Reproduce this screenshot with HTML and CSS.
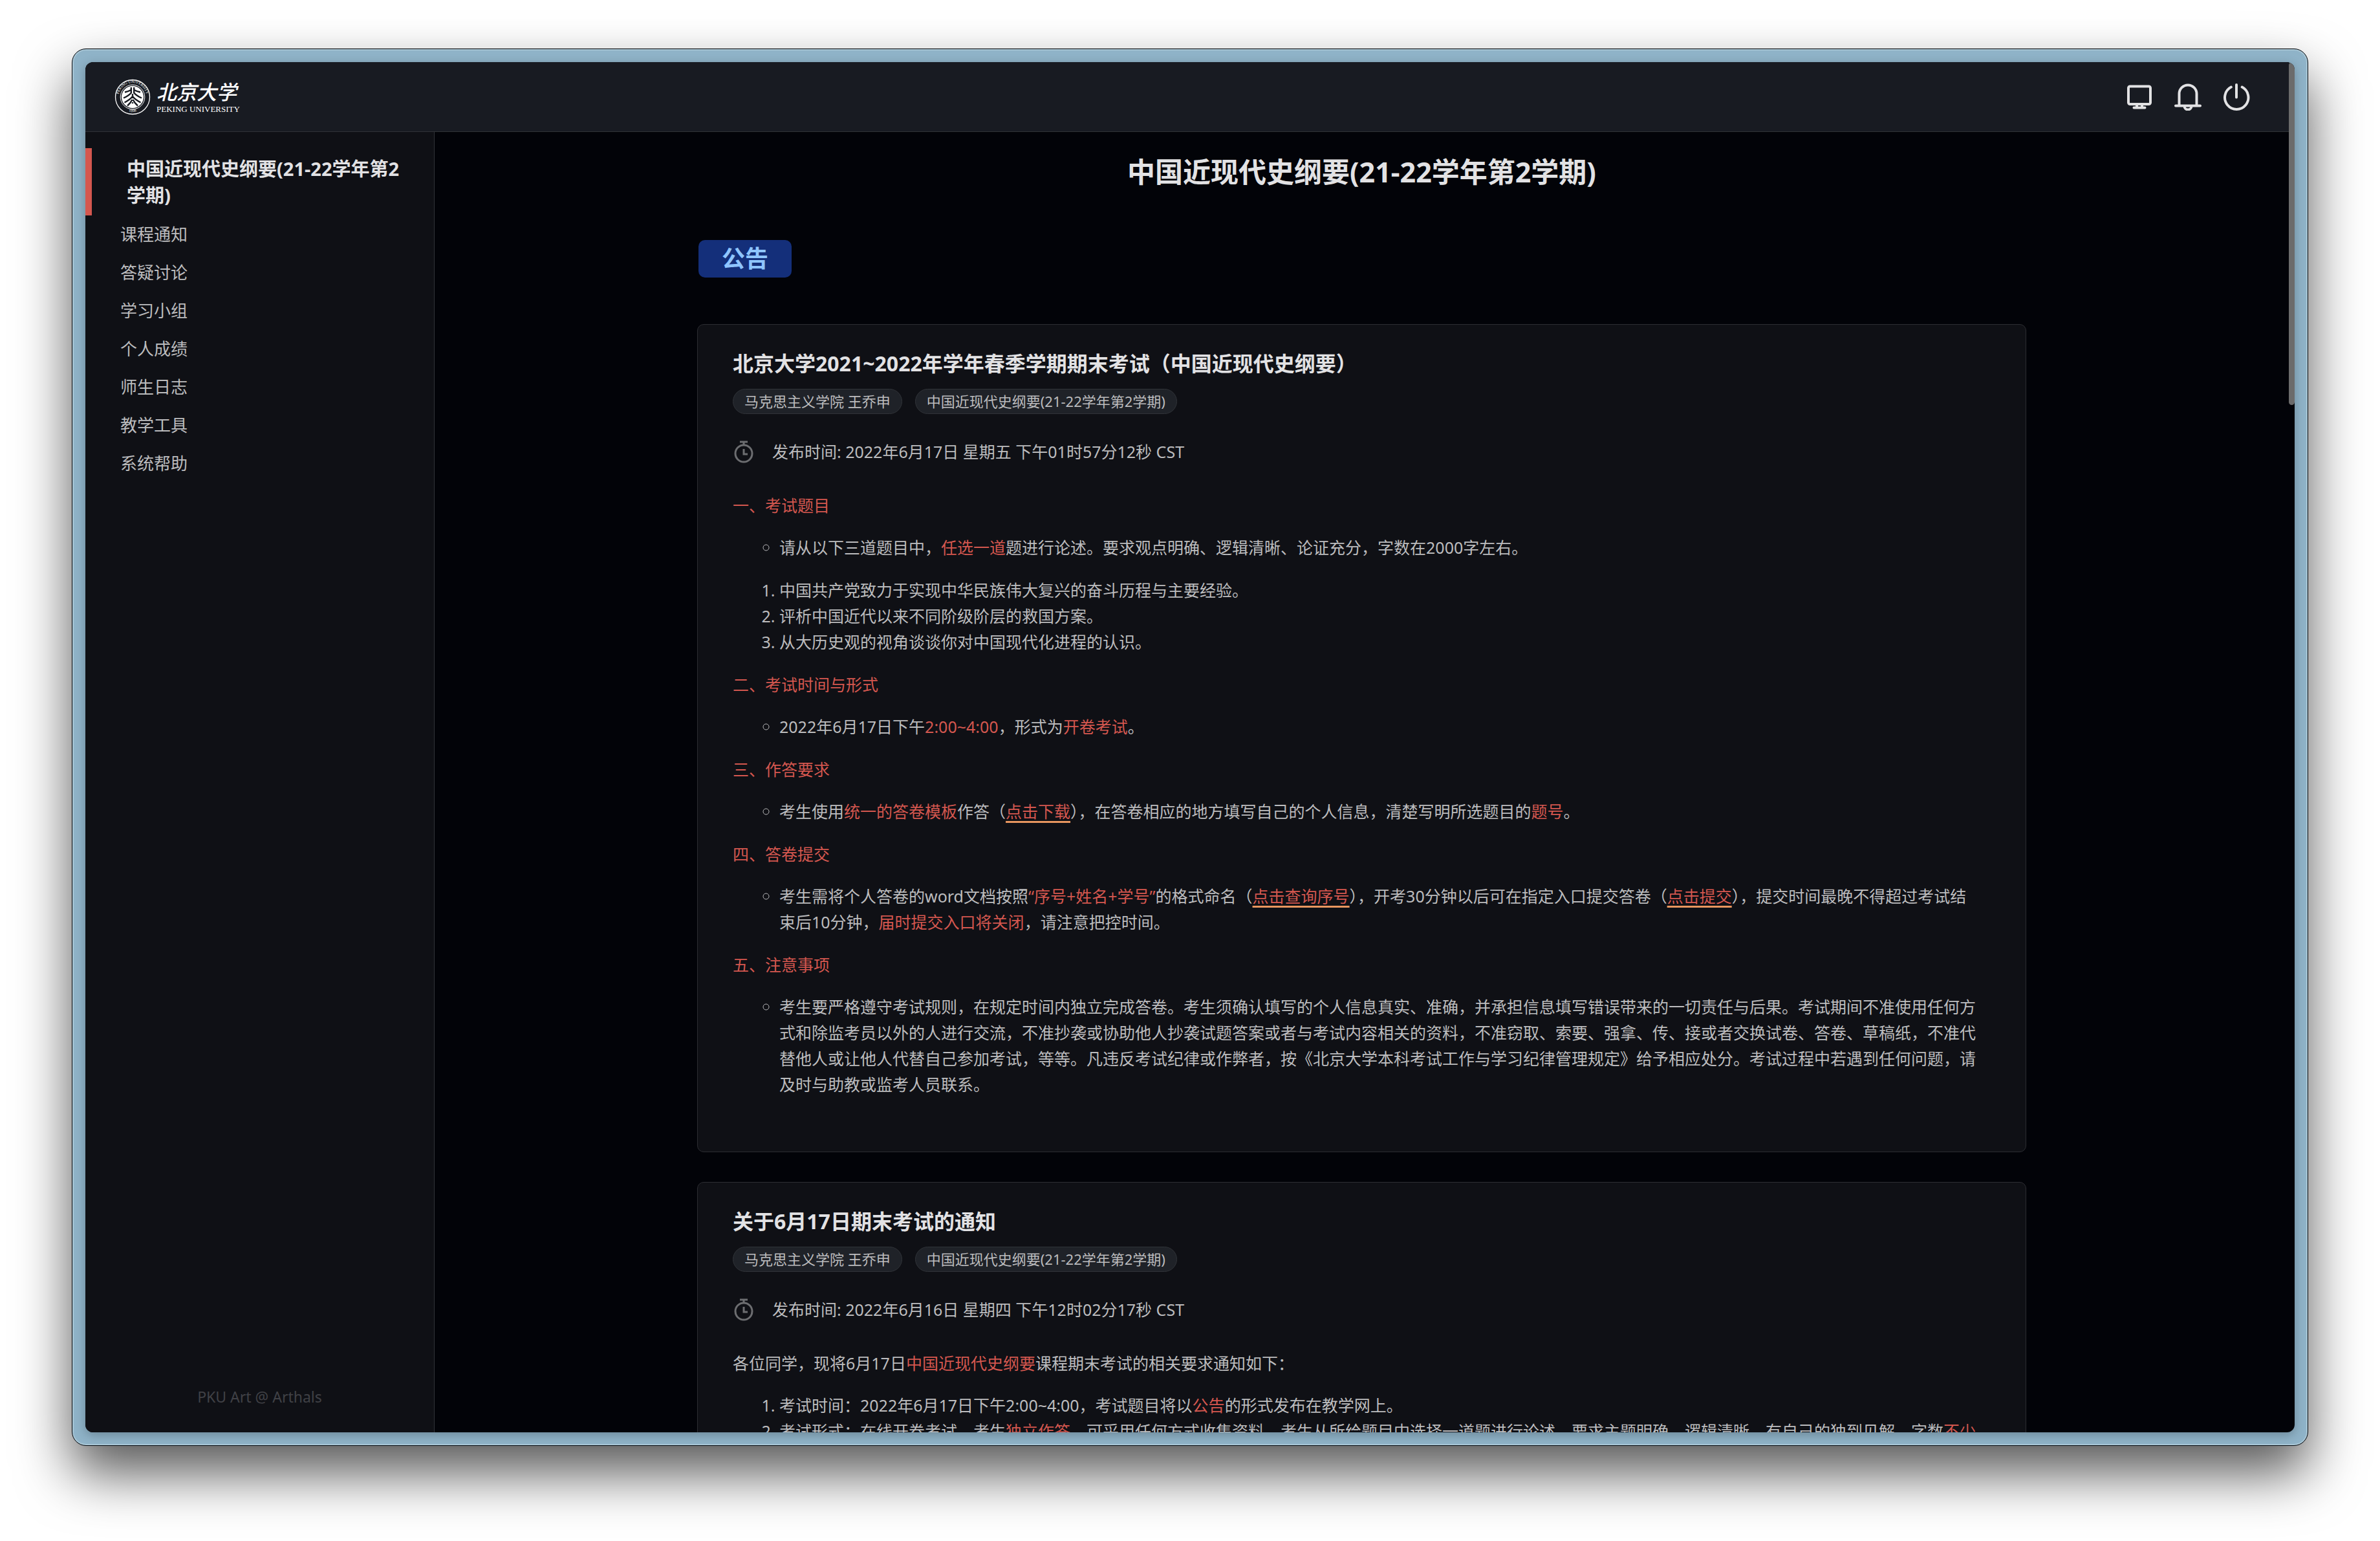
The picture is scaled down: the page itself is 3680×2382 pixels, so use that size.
FILE: index.html
```html
<!DOCTYPE html>
<html lang="zh-CN">
<head>
<meta charset="utf-8">
<title>中国近现代史纲要(21-22学年第2学期)</title>
<link rel="stylesheet" href="styles.css">
</head>
<body>
<div class="window">
  <div class="screen">
    <div class="page">
      <header class="topbar">
        <a class="brand" href="#" aria-label="北京大学">
          <svg class="seal" viewBox="0 0 56 56" aria-hidden="true">
            <defs>
              <path id="ring-top" d="M9.5 38.5A21.5 21.5 0 1 1 46.5 38.5"/>
              <path id="ring-bottom" d="M13 45.5A23 23 0 0 0 43 45.5"/>
            </defs>
            <circle cx="28" cy="28" r="26.5" fill="none" stroke="#fff" stroke-width="1.3"/>
            <circle cx="28" cy="28" r="18.8" fill="none" stroke="#fff" stroke-width="1"/>
            <circle cx="28" cy="28" r="17" fill="#fff"/>
            <text class="seal-text"><textPath href="#ring-top" startOffset="50%" text-anchor="middle">PEKING UNIVERSITY</textPath></text>
            <text class="seal-text"><textPath href="#ring-bottom" startOffset="50%" text-anchor="middle">1898</textPath></text>
            <g fill="none" stroke="#181b22" stroke-width="2.4">
              <path d="M25.8 13V21.5Q22 26 14 29.5M30.2 13V21.5Q34 26 42 29.5"/>
              <path d="M16 20.5Q21 19.5 25.8 17M40 20.5Q35 19.5 30.2 17"/>
              <path d="M28 23V30M28 27Q24 32 15.500 36.500M28 27Q32 32 40.500 36.500"/>
              <path d="M27.500 32Q25 37 20 41.500M28.500 32Q31 37 36 41.500"/>
              <path d="M28 36V38"/>
            </g>
          </svg>
          <span class="wordmark">
            <span class="wordmark-zh">北京大学</span>
            <span class="wordmark-en">PEKING UNIVERSITY</span>
          </span>
        </a>
        <div class="actions">
          <button class="icon-button" type="button" aria-label="显示">
            <svg viewBox="0 0 42 42"><rect x="4" y="4.500" width="34" height="27.500" rx="2.500"/><path d="M17 32v5M25 32v5M12.500 37.500h17"/></svg>
          </button>
          <button class="icon-button" type="button" aria-label="通知">
            <svg viewBox="0 0 42 42"><path d="M7.500 34V16a13.500 13.500 0 0 1 27 0v18M2 34.500h38M15.500 35a5.500 5.500 0 0 0 11 0"/></svg>
          </button>
          <button class="icon-button" type="button" aria-label="退出">
            <svg viewBox="0 0 42 42"><path d="M12.800 5.600a18.200 18.200 0 1 0 16.900 0M21 2v19.500"/></svg>
          </button>
        </div>
      </header>
      <div class="body">
        <aside class="sidebar">
          <nav>
            <a class="course" href="#">中国近现代史纲要(21-22学年第2学期)</a>
            <ul class="menu">
              <li><a href="#">课程通知</a></li>
              <li><a href="#">答疑讨论</a></li>
              <li><a href="#">学习小组</a></li>
              <li><a href="#">个人成绩</a></li>
              <li><a href="#">师生日志</a></li>
              <li><a href="#">教学工具</a></li>
              <li><a href="#">系统帮助</a></li>
            </ul>
          </nav>
          <p class="credit">PKU Art @ Arthals</p>
        </aside>
        <main class="content">
          <h1>中国近现代史纲要(21-22学年第2学期)</h1>
          <div class="column">
            <h2 class="badge">公告</h2>
            <article class="card">
              <h3>北京大学2021~2022年学年春季学期期末考试（中国近现代史纲要）</h3>
              <div class="tags"><span class="tag">马克思主义学院 王乔申</span><span class="tag">中国近现代史纲要(21-22学年第2学期)</span></div>
              <div class="time">
                <svg viewBox="0 0 32 36" aria-hidden="true"><circle cx="16" cy="21" r="13"/><path d="M10 3h12M16 3v5M16 14v8h6"/></svg>
                <span>发布时间: 2022年6月17日 星期五 下午01时57分12秒 CST</span>
              </div>
              <div class="text">
                <p><em>一、考试题目</em></p>
                <ul><li>请从以下三道题目中，<em>任选一道</em>题进行论述。要求观点明确、逻辑清晰、论证充分，字数在2000字左右。</li></ul>
                <ol>
                  <li>中国共产党致力于实现中华民族伟大复兴的奋斗历程与主要经验。</li>
                  <li>评析中国近代以来不同阶级阶层的救国方案。</li>
                  <li>从大历史观的视角谈谈你对中国现代化进程的认识。</li>
                </ol>
                <p><em>二、考试时间与形式</em></p>
                <ul><li>2022年6月17日下午<em>2:00~4:00</em>，形式为<em>开卷考试</em>。</li></ul>
                <p><em>三、作答要求</em></p>
                <ul><li>考生使用<em>统一的答卷模板</em>作答（<a href="#">点击下载</a>），在答卷相应的地方填写自己的个人信息，清楚写明所选题目的<em>题号</em>。</li></ul>
                <p><em>四、答卷提交</em></p>
                <ul><li>考生需将个人答卷的word文档按照<em>“序号+姓名+学号”</em>的格式命名（<a href="#">点击查询序号</a>），开考30分钟以后可在指定入口提交答卷（<a href="#">点击提交</a>），提交时间最晚不得超过考试结束后10分钟，<em>届时提交入口将关闭</em>，请注意把控时间。</li></ul>
                <p><em>五、注意事项</em></p>
                <ul><li>考生要严格遵守考试规则，在规定时间内独立完成答卷。考生须确认填写的个人信息真实、准确，并承担信息填写错误带来的一切责任与后果。考试期间不准使用任何方式和除监考员以外的人进行交流，不准抄袭或协助他人抄袭试题答案或者与考试内容相关的资料，不准窃取、索要、强拿、传、接或者交换试卷、答卷、草稿纸，不准代替他人或让他人代替自己参加考试，等等。凡违反考试纪律或作弊者，按《北京大学本科考试工作与学习纪律管理规定》给予相应处分。考试过程中若遇到任何问题，请及时与助教或监考人员联系。</li></ul>
              </div>
            </article>
            <article class="card">
              <h3>关于6月17日期末考试的通知</h3>
              <div class="tags"><span class="tag">马克思主义学院 王乔申</span><span class="tag">中国近现代史纲要(21-22学年第2学期)</span></div>
              <div class="time">
                <svg viewBox="0 0 32 36" aria-hidden="true"><circle cx="16" cy="21" r="13"/><path d="M10 3h12M16 3v5M16 14v8h6"/></svg>
                <span>发布时间: 2022年6月16日 星期四 下午12时02分17秒 CST</span>
              </div>
              <div class="text">
                <p>各位同学，现将6月17日<em>中国近现代史纲要</em>课程期末考试的相关要求通知如下：</p>
                <ol>
                  <li>考试时间：2022年6月17日下午2:00~4:00，考试题目将以<em>公告</em>的形式发布在教学网上。</li>
                  <li>考试形式：在线开卷考试，考生<em>独立作答</em>，可采用任何方式收集资料，考生从所给题目中选择一道题进行论述，要求主题明确、逻辑清晰、有自己的独到见解，字数<em>不少</em></li>
                </ol>
              </div>
            </article>
          </div>
        </main>
      </div>
    </div>
    <div class="scrollbar" aria-hidden="true"><div class="thumb"></div></div>
  </div>
</div>
</body>
</html>
```

FILE: styles.css
```css
* {
  box-sizing: border-box;
}

body {
  margin: 0;
  height: 100vh;
  padding: 75px 111px 147px;
  background: #fff;
  color: #bcbcbe;
  font-family: "Noto Sans", "Noto Sans CJK SC", sans-serif;
  font-size: 25px;
  line-height: 40px;
  overflow: hidden;
}

a {
  color: inherit;
  text-decoration: none;
}

h1, h2, h3, p, ul, ol {
  margin: 0;
  padding: 0;
}

.window {
  height: 100%;
  padding: 20px;
  border: 1px solid #05080c;
  border-radius: 22px;
  background: #8fb3c8;
  box-shadow: inset 0 0 0 2px #a8c6d5, 0 42px 84px rgba(0, 0, 0, 0.66);
}

.screen {
  display: flex;
  height: 100%;
  border-radius: 12px;
  overflow: hidden;
  background: #020308;
  box-shadow: 0 4px 16px rgba(0, 0, 0, 0.25);
}

.page {
  flex: 1;
  min-width: 0;
  display: flex;
  flex-direction: column;
}

.scrollbar {
  width: 9px;
}

.thumb {
  height: 25%;
  border-radius: 5px;
  background: #6b6b6b;
}

.topbar {
  flex: none;
  display: flex;
  align-items: center;
  justify-content: space-between;
  height: 108px;
  padding: 0 60px 0 45px;
  background: #181b22;
  border-bottom: 1px solid #303237;
}

.brand {
  display: flex;
  align-items: center;
  gap: 9px;
  color: #fff;
}

.seal {
  width: 56px;
  height: 56px;
}

.seal-text {
  fill: #fff;
  font-family: "Liberation Serif", serif;
  font-size: 6px;
}

.wordmark {
  display: flex;
  flex-direction: column;
  gap: 2px;
}

.wordmark-zh {
  font-size: 31px;
  font-style: italic;
  font-weight: 500;
  line-height: 36px;
}

.wordmark-en {
  font-family: "Liberation Serif", serif;
  font-size: 13px;
  line-height: 14px;
}

.actions {
  display: flex;
  gap: 33px;
}

.icon-button {
  width: 42px;
  height: 42px;
  padding: 0;
  border: 0;
  background: none;
}

.icon-button svg {
  display: block;
  fill: none;
  stroke: #e2e2e4;
  stroke-width: 4;
  stroke-linecap: round;
  stroke-linejoin: round;
}

.body {
  flex: 1;
  min-height: 0;
  display: flex;
}

.sidebar {
  flex: none;
  display: flex;
  flex-direction: column;
  justify-content: space-between;
  width: 540px;
  padding: 25px 0 35px;
  background: #0f1015;
  border-right: 1px solid #303237;
}

.course {
  display: block;
  padding: 11px 40px 11px 54px;
  border-left: 10px solid #d4574f;
  color: #e2e2e4;
  font-size: 29px;
  font-weight: 700;
  line-height: 41px;
}

.menu {
  padding-left: 54px;
  list-style: none;
  font-size: 26px;
  line-height: 59px;
}

.menu a {
  display: block;
}

.credit {
  color: #404146;
  font-size: 23px;
  text-align: center;
}

.content {
  flex: 1;
  min-width: 0;
  padding: 32px 20px 0;
  overflow: hidden;
}

h1 {
  color: #e2e2e4;
  font-size: 43px;
  font-weight: 700;
  line-height: 60px;
  text-align: center;
}

.column {
  display: flex;
  flex-direction: column;
  max-width: 2055px;
  margin: 75px auto 0;
}

.badge {
  align-self: flex-start;
  margin: 0 0 72px 2px;
  padding: 0 36px;
  border-radius: 10px;
  background: #142f7a;
  color: #8fc5ff;
  font-size: 36px;
  font-weight: 700;
  line-height: 58px;
}

.card {
  margin-bottom: 46px;
  padding: 36px 72px 58px 54px;
  border: 1px solid #2c2d32;
  border-radius: 10px;
  background: #0f1015;
}

h3 {
  color: #e2e2e4;
  font-size: 32px;
  font-weight: 700;
  line-height: 48px;
}

.tags {
  display: flex;
  gap: 20px;
  margin-top: 15px;
}

.tag {
  padding: 0 17px;
  border: 1px solid #303338;
  border-radius: 20px;
  background: #1f2228;
  font-size: 22px;
  line-height: 37px;
}

.time {
  display: flex;
  align-items: center;
  gap: 27px;
  margin: 38px 0 43px;
}

.time svg {
  width: 34px;
  height: 36px;
  fill: none;
  stroke: #6c6d70;
  stroke-width: 3;
}

.text p {
  margin-bottom: 25px;
}

.text ul,
.text ol {
  margin-bottom: 26px;
  padding-left: 72px;
}

.text ul {
  list-style: circle;
}

.text em,
.text a {
  color: #d4574f;
  font-style: normal;
}

.text a {
  text-decoration: underline 3px #e8965f;
  text-decoration-skip-ink: none;
  text-underline-offset: 5px;
}
```
